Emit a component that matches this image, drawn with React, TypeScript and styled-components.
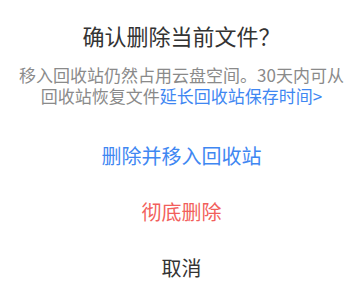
import React from 'react'
import styled, { createGlobalStyle } from 'styled-components'

const GlobalStyle = createGlobalStyle`
  html, body {
    margin: 0;
    padding: 0;
    background: #ffffff;
  }
  body {
    font-family: "Noto Sans CJK SC", "Noto Sans", sans-serif;
  }
`

const Sheet = styled.div`
  width: 363px;
  height: 291px;
  overflow: hidden;
  background: #ffffff;
  display: flex;
  flex-direction: column;
  align-items: center;
  padding-top: 20px;
  box-sizing: border-box;
`

const Title = styled.h1`
  margin: 0;
  font-size: 22px;
  line-height: 30px;
  font-weight: 400;
  color: #333333;
  text-align: center;
`

const Desc = styled.p`
  margin: 14px 0 0;
  padding: 0 12px;
  font-size: 17px;
  line-height: 21px;
  color: #8a8a8a;
  text-align: center;
`

const Link = styled.span`
  color: #3f87f2;
`

const Actions = styled.div`
  margin-top: 21px;
  width: 100%;
  display: flex;
  flex-direction: column;
`

type Tone = 'primary' | 'danger' | 'plain'

const toneColor: Record<Tone, string> = {
  primary: '#3f87f2',
  danger: '#f25f5c',
  plain: '#333333',
}

const ActionButton = styled.button<{ $tone: Tone }>`
  height: 56px;
  width: 100%;
  border: none;
  background: transparent;
  padding: 0;
  font-family: inherit;
  font-size: 20px;
  color: ${({ $tone }) => toneColor[$tone]};
  cursor: pointer;
`

export default function App() {
  return (
    <>
      <GlobalStyle />
      <Sheet>
        <Title>确认删除当前文件？</Title>
        <Desc>
          移入回收站仍然占用云盘空间。30天内可从回收站恢复文件
          <Link>延长回收站保存时间&gt;</Link>
        </Desc>
        <Actions>
          <ActionButton $tone="primary">删除并移入回收站</ActionButton>
          <ActionButton $tone="danger">彻底删除</ActionButton>
          <ActionButton $tone="plain">取消</ActionButton>
        </Actions>
      </Sheet>
    </>
  )
}
